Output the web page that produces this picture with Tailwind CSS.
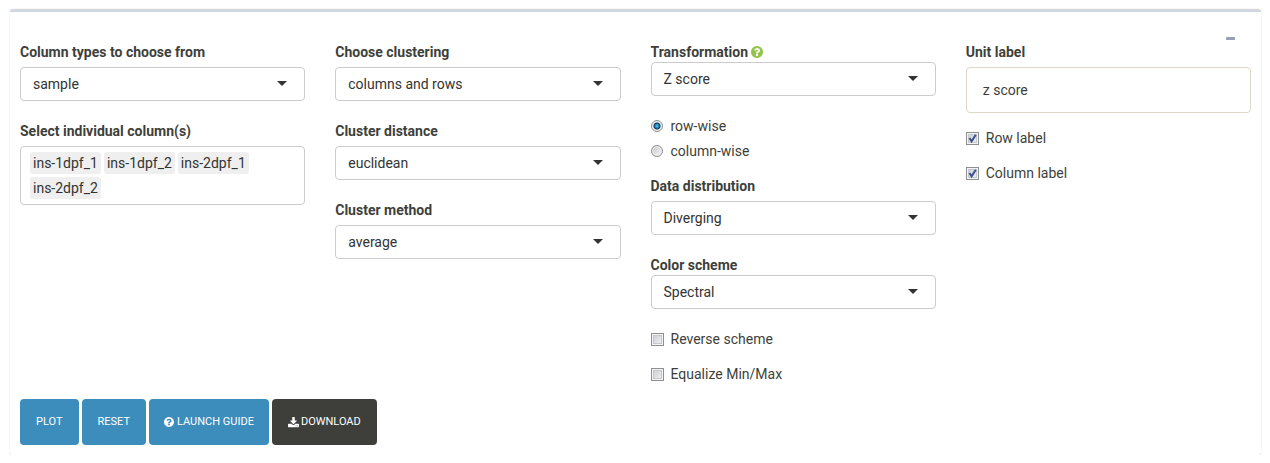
<!DOCTYPE html>
<html lang="en">
<head>
<meta charset="utf-8">
<meta name="viewport" content="width=device-width, initial-scale=1">
<title>Heatmap options</title>
<script src="https://cdn.jsdelivr.net/npm/@tailwindcss/browser@4"></script>
</head>
<body class="bg-white font-['Roboto','Liberation_Sans',sans-serif] text-sm/5 text-[#3e3f3a]">
<svg class="hidden" aria-hidden="true">
  <symbol id="caret" viewBox="0 0 10 5"><path d="M0 0h10L5 5z" fill="#333"/></symbol>
  <symbol id="check" viewBox="0 0 13 13"><path d="M3.400 6 5.600 9.400 9.800 2.800" fill="none" stroke="#3d5290" stroke-width="2"/></symbol>
  <symbol id="question" viewBox="0 0 1536 1536"><path fill="currentColor" d="M896 1248v-192q0-14-9-23t-23-9H672q-14 0-23 9t-9 23v192q0 14 9 23t23 9h192q14 0 23-9t9-23zm256-672q0-88-55.500-163T958 297t-170-41q-243 0-371 213-15 24 8 42l132 100q7 6 19 6 16 0 25-12 53-68 86-92 34-24 86-24 48 0 85.500 26t37.500 59q0 38-20 61t-68 45q-63 28-115.500 86.500T640 892v36q0 14 9 23t23 9h192q14 0 23-9t9-23q0-19 21.500-49.500T972 829q32-18 49-28.500t46-35 44.500-48 28-60.500 12.500-81zm384 192q0 209-103 385.500T1153.500 1433 768 1536t-385.500-103T103 1153.500 0 768t103-385.500T382.500 103 768 0t385.500 103T1433 382.500 1536 768z"/></symbol>
  <symbol id="download" viewBox="0 -128 1664 1664"><path fill="currentColor" d="M1280 1216q0-26-19-45t-45-19-45 19-19 45 19 45 45 19 45-19 19-45zm256 0q0-26-19-45t-45-19-45 19-19 45 19 45 45 19 45-19 19-45zm128-224v320q0 40-28 68t-68 28H96q-40 0-68-28t-28-68V992q0-40 28-68t68-28h465l135 136q58 56 136 56t136-56l136-136h464q40 0 68 28t28 68zm-325-569q17 41-14 70L877 941q-18 19-45 19t-45-19L339 493q-31-29-14-70 17-39 59-39h256V-64q0-26 19-45t45-19h256q26 0 45 19t19 45v448h256q42 0 59 39z"/></symbol>
</svg>
<main class="px-[10px] pt-[9px] pr-[9px]">
  <form class="rounded-[3px] border-t-3 border-[#d2d6de] px-[10px] pb-[10px] shadow-[0_1px_1px_rgba(0,0,0,0.1),0_0_1px_1px_rgba(0,0,0,0.03)]" onsubmit="return false">
    <div class="flex h-[30px] items-end justify-end">
      <button type="button" aria-label="Collapse" class="px-4 pt-3 pb-0.5 text-[#97a0b3]"><svg class="h-[3px] w-[9px]" viewBox="0 0 9 3"><rect width="9" height="3" rx="0.800" fill="currentColor"/></svg></button>
    </div>
    <div class="grid grid-cols-4 gap-x-[30px]">
      <div class="flex flex-col gap-5">
        <div class="flex flex-col gap-[5px]">
          <label for="types" class="font-bold">Column types to choose from</label>
          <div class="relative">
            <select id="types" class="block h-[34px] w-full appearance-none rounded border border-[#ccc] bg-white px-3 text-[#333]"><option>sample</option></select>
            <svg class="pointer-events-none absolute top-[14px] right-[18px] h-[5px] w-[10px]"><use href="#caret"/></svg>
          </div>
        </div>
        <div class="flex flex-col gap-[5px]">
          <label for="cols" class="font-bold">Select individual column(s)</label>
          <div class="flex flex-wrap gap-[3px] rounded border border-[#ccc] px-[9px] py-[5px] text-[#333]">
            <span class="rounded-[3px] bg-[#efefef] px-[3px] py-px">ins-1dpf_1</span>
            <span class="rounded-[3px] bg-[#efefef] px-[3px] py-px">ins-1dpf_2</span>
            <span class="rounded-[3px] bg-[#efefef] px-[3px] py-px">ins-2dpf_1</span>
            <span class="rounded-[3px] bg-[#efefef] px-[3px] py-px">ins-2dpf_2</span>
            <input id="cols" type="text" class="w-1 outline-none">
          </div>
        </div>
      </div>

      <div class="flex flex-col gap-5">
        <div class="flex flex-col gap-[5px]">
          <label for="clustering" class="font-bold">Choose clustering</label>
          <div class="relative">
            <select id="clustering" class="block h-[34px] w-full appearance-none rounded border border-[#ccc] bg-white px-3 text-[#333]"><option>columns and rows</option></select>
            <svg class="pointer-events-none absolute top-[14px] right-[18px] h-[5px] w-[10px]"><use href="#caret"/></svg>
          </div>
        </div>
        <div class="flex flex-col gap-[5px]">
          <label for="distance" class="font-bold">Cluster distance</label>
          <div class="relative">
            <select id="distance" class="block h-[34px] w-full appearance-none rounded border border-[#ccc] bg-white px-3 text-[#333]"><option>euclidean</option></select>
            <svg class="pointer-events-none absolute top-[14px] right-[18px] h-[5px] w-[10px]"><use href="#caret"/></svg>
          </div>
        </div>
        <div class="flex flex-col gap-[5px]">
          <label for="method" class="font-bold">Cluster method</label>
          <div class="relative">
            <select id="method" class="block h-[34px] w-full appearance-none rounded border border-[#ccc] bg-white px-3 text-[#333]"><option>average</option></select>
            <svg class="pointer-events-none absolute top-[14px] right-[18px] h-[5px] w-[10px]"><use href="#caret"/></svg>
          </div>
        </div>
      </div>

      <div class="flex flex-col">
        <div class="flex items-center gap-[3px]">
          <label for="transform" class="font-bold">Transformation</label>
          <svg class="size-3 text-[#93c54b]"><use href="#question"/></svg>
        </div>
        <div class="relative">
          <select id="transform" class="block h-[34px] w-full appearance-none rounded border border-[#ccc] bg-white px-3 text-[#333]"><option>Z score</option></select>
          <svg class="pointer-events-none absolute top-[14px] right-[18px] h-[5px] w-[10px]"><use href="#caret"/></svg>
        </div>
        <div class="mt-5 flex flex-col gap-[5px]">
          <label class="flex items-center gap-2"><input type="radio" name="wise" checked class="size-3 appearance-none rounded-full border border-[#8e8f8f] bg-[radial-gradient(circle,#5fc8f0_0px,#1f7db5_2px,#0b3a5c_3px,#e8eaeb_4px,#f4f4f4_5px)]">row-wise</label>
          <label class="flex items-center gap-2"><input type="radio" name="wise" class="size-3 appearance-none rounded-full border border-[#8e8f8f] bg-[linear-gradient(135deg,#c4c8cd,#f6f6f6)] shadow-[inset_0_0_0_1px_#f4f4f4]">column-wise</label>
        </div>
        <div class="mt-[15px] flex flex-col gap-[5px]">
          <label for="distribution" class="font-bold">Data distribution</label>
          <div class="relative">
            <select id="distribution" class="block h-[34px] w-full appearance-none rounded border border-[#ccc] bg-white px-3 text-[#333]"><option>Diverging</option></select>
            <svg class="pointer-events-none absolute top-[14px] right-[18px] h-[5px] w-[10px]"><use href="#caret"/></svg>
          </div>
        </div>
        <div class="mt-5 flex flex-col">
          <label for="scheme" class="font-bold">Color scheme</label>
          <div class="relative">
            <select id="scheme" class="block h-[34px] w-full appearance-none rounded border border-[#ccc] bg-white px-3 text-[#333]"><option>Spectral</option></select>
            <svg class="pointer-events-none absolute top-[14px] right-[18px] h-[5px] w-[10px]"><use href="#caret"/></svg>
          </div>
        </div>
        <div class="mt-5 flex flex-col gap-[15px]">
          <label class="flex items-center gap-[7px]"><input type="checkbox" class="size-[13px] appearance-none border border-[#8e8f8f] bg-[linear-gradient(135deg,#c4c8cf,#f6f6f6)] shadow-[inset_0_0_0_1px_#f4f4f4,inset_0_0_0_2px_#c5c9ce]">Reverse scheme</label>
          <label class="flex items-center gap-[7px]"><input type="checkbox" class="size-[13px] appearance-none border border-[#8e8f8f] bg-[linear-gradient(135deg,#c4c8cf,#f6f6f6)] shadow-[inset_0_0_0_1px_#f4f4f4,inset_0_0_0_2px_#c5c9ce]">Equalize Min/Max</label>
        </div>
      </div>

      <div class="flex flex-col">
        <label for="unit" class="font-bold">Unit label</label>
        <input id="unit" type="text" value="z score" class="mt-[5px] h-[46px] w-full rounded border border-[#dfd7ca] px-4">
        <div class="mt-[15px] flex flex-col gap-[15px]">
          <label class="flex items-center gap-[7px]"><span class="relative flex"><input type="checkbox" checked class="peer size-[13px] appearance-none border border-[#8e8f8f] bg-[linear-gradient(135deg,#c4c8cf,#f6f6f6)] shadow-[inset_0_0_0_1px_#f4f4f4,inset_0_0_0_2px_#c5c9ce]"><svg class="pointer-events-none absolute inset-0 hidden size-[13px] peer-checked:block"><use href="#check"/></svg></span>Row label</label>
          <label class="flex items-center gap-[7px]"><span class="relative flex"><input type="checkbox" checked class="peer size-[13px] appearance-none border border-[#8e8f8f] bg-[linear-gradient(135deg,#c4c8cf,#f6f6f6)] shadow-[inset_0_0_0_1px_#f4f4f4,inset_0_0_0_2px_#c5c9ce]"><svg class="pointer-events-none absolute inset-0 hidden size-[13px] peer-checked:block"><use href="#check"/></svg></span>Column label</label>
        </div>
      </div>
    </div>
    <div class="mt-[15px] flex flex-wrap gap-[3px] text-[11px] text-white">
      <button type="button" class="h-[46px] rounded bg-[#3c8dbc] px-4">PLOT</button>
      <button type="button" class="h-[46px] rounded bg-[#3c8dbc] px-4">RESET</button>
      <button type="button" class="flex h-[46px] items-center gap-[3px] rounded bg-[#3c8dbc] px-[15px]"><svg class="size-[10px]"><use href="#question"/></svg>LAUNCH GUIDE</button>
      <button type="button" class="flex h-[46px] items-center gap-0.5 rounded bg-[#3e3f3a] px-4"><svg class="size-[11px]"><use href="#download"/></svg>DOWNLOAD</button>
    </div>
  </form>
</main>
</body>
</html>
